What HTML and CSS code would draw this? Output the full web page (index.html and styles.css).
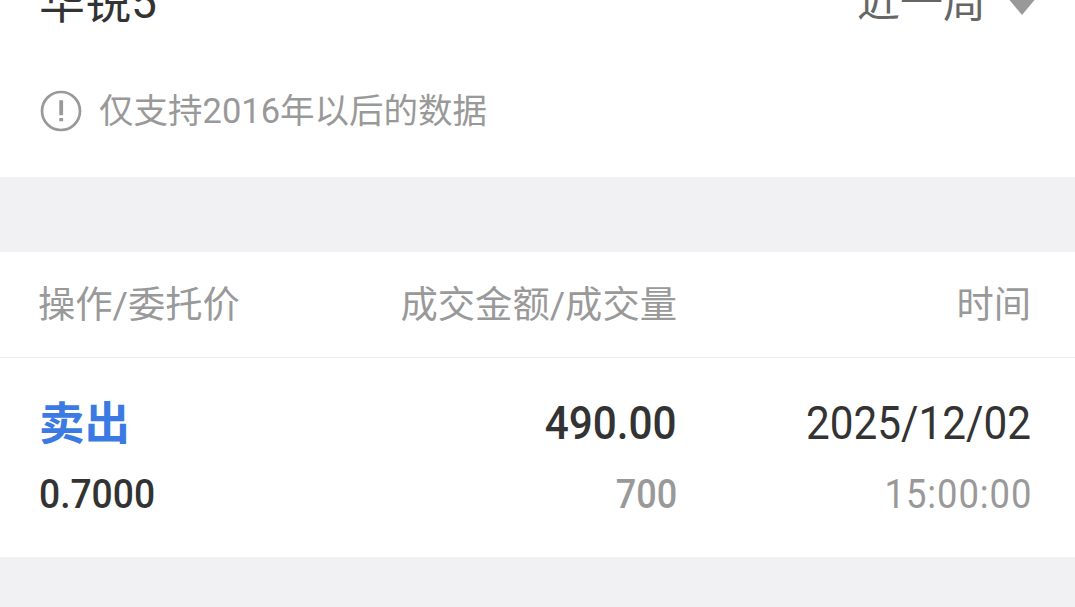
FILE: index.html
```
<!DOCTYPE html>
<html lang="zh-CN">
<head>
  <meta charset="UTF-8" />
  <title>成交记录</title>
  <link rel="stylesheet" href="styles.css">
</head>
<body>
  <section class="filter">
    <div class="filter-row">
      <div class="stock">华锐5</div>
      <div class="period">近一周
        <svg class="arrow" width="32" height="20" viewBox="0 0 32 20"><path d="M1 0H31L16 18Z" fill="#999"/></svg>
      </div>
    </div>
    <div class="tip">
      <svg class="tip-icon" width="42" height="42" viewBox="0 0 42 42">
        <circle cx="21" cy="21" r="19" fill="none" stroke="#999" stroke-width="2.7"/>
        <path d="M19.3 10.3h3.8v14.9h-3.8zM19.3 28h3.8v3.2h-3.8z" fill="#999"/>
      </svg>
      <span class="tip-text">仅支持2016年以后的数据</span>
    </div>
  </section>

  <section class="records">
    <div class="row head">
      <div>操作/委托价</div>
      <div>成交金额/成交量</div>
      <div>时间</div>
    </div>
    <div class="row">
      <div class="cell">
        <div class="main sell">卖出</div>
        <div class="sub price"><span class="num">0.7000</span></div>
      </div>
      <div class="cell">
        <div class="main amount"><span class="num">490.00</span></div>
        <div class="sub volume"><span class="num">700</span></div>
      </div>
      <div class="cell">
        <div class="main date"><span class="num">2025/12/02</span></div>
        <div class="sub time"><span class="num">15:00:00</span></div>
      </div>
    </div>
  </section>
</body>
</html>
```

FILE: styles.css
```
* {
  box-sizing: border-box;
}

body {
  margin: 0;
  background-color: #f1f1f4;
  font-family: Roboto, "Noto Sans CJK SC", sans-serif;
  color: #333;
  height: 607px;
  overflow: hidden;
}

.filter {
  height: 177px;
  background-color: #fff;
  padding: 0 40px 0 39px;
  overflow: hidden;
}

.filter-row {
  display: flex;
  justify-content: space-between;
  height: 60px;
  line-height: 60px;
  margin-top: -28px;
}

.stock {
  font-size: 46px;
}

.period {
  display: flex;
  font-size: 43px;
  line-height: 61px;
  color: #666;
}

.arrow {
  margin: 25px -3px 0 20px;
}

.tip {
  display: flex;
  align-items: center;
  height: 42px;
  margin-top: 58px;
  font-size: 34.5px;
  color: #999;
}

.tip-icon {
  margin: 0 17px 0 1px;
}

.tip-text {
  padding-bottom: 7px;
}

.records {
  margin-top: 75px;
  height: 305px;
  background-color: #fff;
}

.row {
  display: grid;
  grid-template-columns: 300px 338px 354px;
  padding-left: 39px;
}

.row > :nth-child(n+2) {
  text-align: right;
}

.head {
  height: 106px;
  line-height: 106px;
  padding-left: 38px;
  grid-template-columns: 301px 338px 354px;
  font-size: 37.3px;
  color: #999;
  border-bottom: 1px solid #ebebed;
}

.main {
  height: 72px;
  line-height: 72px;
  margin-top: 29px;
  font-size: 47px;
}

.sub {
  height: 64px;
  line-height: 64px;
  margin-top: 4px;
  font-size: 40px;
}

/* narrow digits */
.num {
  display: inline-block;
  transform: scaleX(0.9);
  transform-origin: right;
}

.sell {
  font-size: 45.5px;
  line-height: 75px;
  font-weight: bold;
  color: #3b7ae3;
}

.price {
  font-weight: 500;
}

.price .num {
  transform: scaleX(0.93);
  transform-origin: left;
}

.amount {
  font-weight: 500;
}

.volume {
  font-weight: 500;
  color: #999;
}

.volume .num {
  transform: scaleX(0.9);
}

.time {
  color: #999;
}

.time .num {
  letter-spacing: 1px;
  margin-right: -1px;
  transform: scaleX(0.91);
}
```
